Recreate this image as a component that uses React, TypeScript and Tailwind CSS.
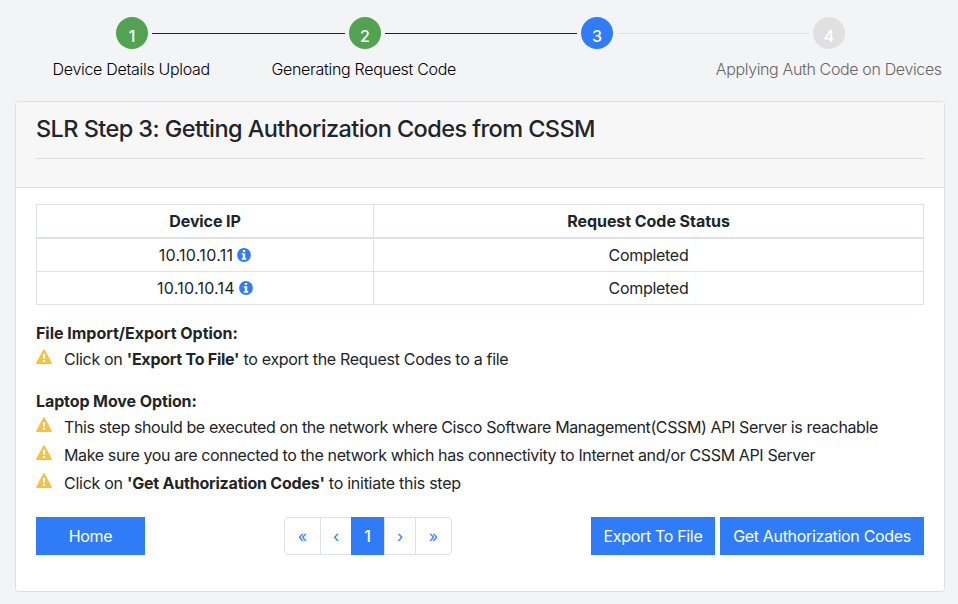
import React from "react";

const Warn = () => (
  <svg viewBox="0 0 16 15" className="mt-0.5 h-[15px] w-4 shrink-0">
    <path fill="#f6c244" d="M7.3.6a.8.8 0 0 1 1.4 0l7.1 13.1a.9.9 0 0 1-.7 1.3H.9a.9.9 0 0 1-.7-1.3z" />
    <path fill="#fff" d="M6.8 5h2.4l-.4 4.7H7.2zM6.9 10.9h2.2v2H6.9z" />
  </svg>
);

const Info = () => (
  <svg viewBox="0 0 14 14" className="h-3.5 w-3.5 shrink-0">
    <circle cx="7" cy="7" r="6.9" fill="#307cf6" />
    <path fill="#fff" d="M5.8 2h2.4v2H5.8zM4.8 5.2h3.4v4.9h1v1.6H4.8v-1.6h1V6.8h-1z" />
  </svg>
);

const Circle = ({ n, color }: { n: string; color: string }) => (
  <div className={`flex h-8 w-8 shrink-0 items-center justify-center rounded-full pt-[5px] text-[16px] font-medium text-white ${color}`}>{n}</div>
);

const Note = ({ children, spacing, h }: { children: React.ReactNode; spacing: string; h: string }) => (
  <div className={`flex gap-3 ${h}`}>
    <Warn />
    <p className={`leading-6 whitespace-nowrap ${spacing}`}>{children}</p>
  </div>
);

const Status = ({ ip, spacing }: { ip: string; spacing: string }) => (
  <div className="flex h-[33px] border-b border-[#dee2e6]">
    <div className="flex w-[337px] items-center justify-center gap-1 border-r border-[#dee2e6]">
      <span className={spacing}>{ip}</span>
      <Info />
    </div>
    <div className="flex flex-1 items-center justify-center tracking-[-0.3px]">Completed</div>
  </div>
);

export default function App() {
  return (
    <div className="h-[604px] w-[958px] overflow-hidden bg-[#f3f4f6] pt-[17px] font-['Inter',sans-serif] text-[16px] text-[#212529]">
      <div className="ml-[116px] flex w-[729px] items-center gap-1">
        <Circle n="1" color="bg-[#51a351]" />
        <div className="mt-px h-px w-[193px] bg-[#212529]" />
        <Circle n="2" color="bg-[#51a351]" />
        <div className="mt-px h-px flex-1 bg-[#212529]" />
        <Circle n="3" color="bg-[#307cf6]" />
        <div className="mt-px h-px flex-1 bg-[#e0e0e0]" />
        <Circle n="4" color="bg-[#e0e0e0]" />
      </div>
      <div className="ml-[15px] mt-2 grid w-[930px] grid-cols-4 text-center leading-6 font-light text-black">
        <span className="tracking-[-0.3px]">Device Details Upload</span>
        <span className="tracking-[-0.3px]">Generating Request Code</span>
        <span />
        <span className="whitespace-nowrap tracking-[-0.36px] text-[#666]">Applying Auth Code on Devices</span>
      </div>
      <div className="mx-[15px] mt-5 h-[491px] w-[930px] rounded border border-[#dcdfe2] bg-white">
        <div className="h-[86px] rounded-t-[3px] border-b border-[#d9dbdd] bg-[#f7f7f7] px-5 pt-3">
          <h1 className="h-[45px] border-b border-[#dddede] text-[23.5px] leading-[30px] font-medium whitespace-nowrap tracking-[-0.58px]">SLR Step 3: Getting Authorization Codes from CSSM</h1>
        </div>
        <div className="px-5 pt-4">
          <div className="border border-b-0 border-[#dee2e6]">
            <div className="flex h-[34px] border-b-2 border-[#dee2e6] font-bold">
              <div className="flex w-[337px] items-center justify-center border-r border-[#dee2e6] tracking-[-0.1px]">Device IP</div>
              <div className="flex flex-1 items-center justify-center tracking-[-0.05px]">Request Code Status</div>
            </div>
            <Status ip="10.10.10.11" spacing="tracking-[0.3px]" />
            <Status ip="10.10.10.14" spacing="tracking-[0.25px]" />
          </div>
          <h2 className="mt-4 h-[26px] leading-6 font-bold tracking-[-0.02px]">File Import/Export Option:</h2>
          <Note h="h-[42px]" spacing="tracking-[-0.3px]">Click on <b className="font-bold tracking-[-0.25px]">'Export To File'</b> to export the Request Codes to a file</Note>
          <h2 className="h-[26px] leading-6 font-bold tracking-[-0.1px]">Laptop Move Option:</h2>
          <Note h="h-7" spacing="tracking-[-0.38px]">This step should be executed on the network where Cisco Software Management(CSSM) API Server is reachable</Note>
          <Note h="h-7" spacing="tracking-[-0.37px]">Make sure you are connected to the network which has connectivity to Internet and/or CSSM API Server</Note>
          <Note h="h-[46px]" spacing="tracking-[-0.27px]">Click on <b className="font-bold tracking-[-0.21px]">'Get Authorization Codes'</b> to initiate this step</Note>
          <div className="flex h-[38px]">
            <button className="w-[109px] bg-[#307cf6] tracking-[-0.3px] text-white">Home</button>
            <div className="ml-[139px] flex w-[168px] text-[#307cf6]">
              <button className="w-[37px] rounded-l border border-[#dee2e6]">«</button>
              <button className="w-[30px] border-y border-[#dee2e6]">‹</button>
              <button className="w-[33px] bg-[#307cf6] font-medium text-white">1</button>
              <button className="w-[32px] border border-[#dee2e6]">›</button>
              <button className="w-9 rounded-r border border-l-0 border-[#dee2e6]">»</button>
            </div>
            <button className="ml-auto w-[124px] bg-[#307cf6] whitespace-nowrap tracking-[-0.33px] text-white">Export To File</button>
            <button className="ml-[5px] w-[204px] bg-[#307cf6] whitespace-nowrap tracking-[-0.33px] text-white">Get Authorization Codes</button>
          </div>
        </div>
      </div>
    </div>
  );
}
